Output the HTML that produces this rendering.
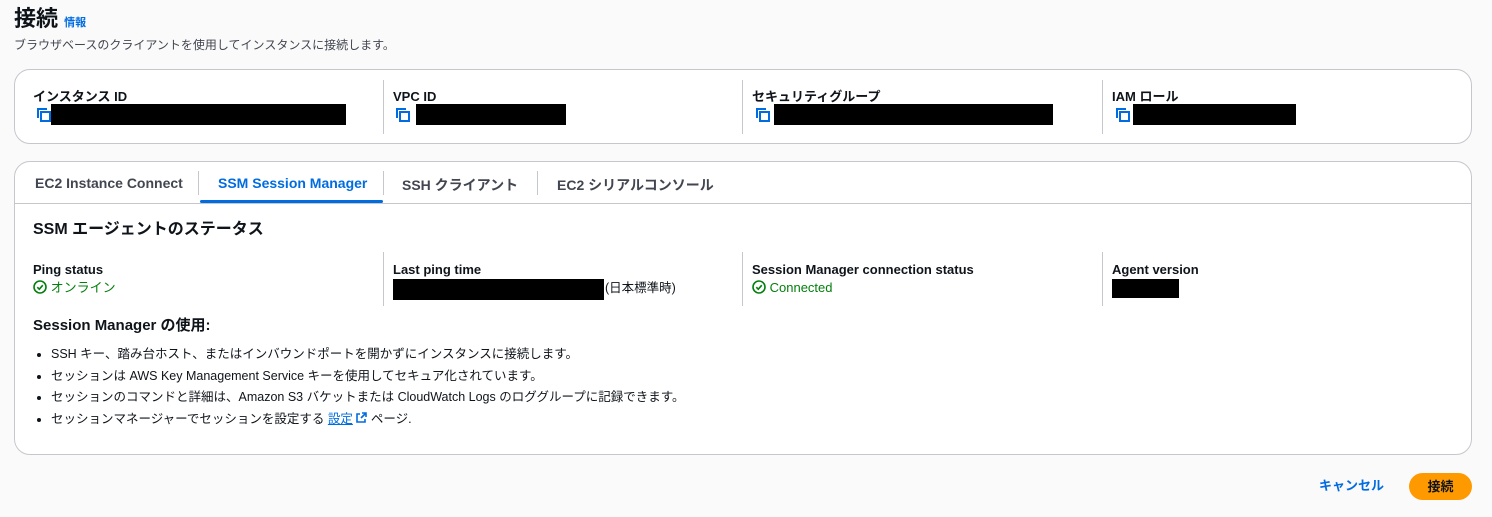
<!DOCTYPE html>
<html><head><meta charset="utf-8"><style>
*{box-sizing:border-box;margin:0;padding:0}
body{width:1492px;height:517px;background:#fafafa;font-family:"Liberation Sans","Noto Sans CJK JP",sans-serif;color:#0f141a;position:relative;overflow:hidden;font-size:13px}
.abs{position:absolute;line-height:16px;white-space:nowrap}
.card{position:absolute;left:14px;width:1458px;background:#fff;border:1px solid #c6c6cd;border-radius:16px}
.lbl{font-weight:bold;font-size:13px}
.blk{background:#000;position:absolute}
.div{position:absolute;width:1px;background:#c6c6cd}
.copy{position:absolute;width:14px;height:14px}
.tab{position:absolute;top:13px;font-weight:bold;font-size:14px;color:#424650}
.ok{color:#037f0c}
li{margin-bottom:5.5px;margin-left:18px;font-size:12.5px;line-height:16px}
</style></head><body>
<div class="abs" style="left:14px;top:6px;font-size:22px;font-weight:bold;line-height:26px">接続 <span style="font-size:11px;color:#006ce0;font-weight:bold">情報</span></div>
<div class="abs" style="left:14px;top:37px;font-size:12px;color:#424650">ブラウザベースのクライアントを使用してインスタンスに接続します。</div>

<div class="card" style="top:69px;height:75px">
 <div class="abs lbl" style="left:18px;top:19px">インスタンス ID</div>
 <div class="abs lbl" style="left:378px;top:19px">VPC ID</div>
 <div class="abs lbl" style="left:737px;top:19px">セキュリティグループ</div>
 <div class="abs lbl" style="left:1097px;top:19px">IAM ロール</div>
 <div class="div" style="left:368px;top:10px;height:54px"></div>
 <div class="div" style="left:727px;top:10px;height:54px"></div>
 <div class="div" style="left:1087px;top:10px;height:54px"></div>
 <svg class="copy" style="left:22px;top:38px" viewBox="0 0 14 14"><path d="M1 10V1h9" fill="none" stroke="#006ce0" stroke-width="2"/><rect x="4" y="4" width="9" height="9" fill="none" stroke="#006ce0" stroke-width="2"/></svg>
 <div class="blk" style="left:36px;top:34px;width:295px;height:21px"></div>
 <svg class="copy" style="left:381px;top:38px" viewBox="0 0 14 14"><path d="M1 10V1h9" fill="none" stroke="#006ce0" stroke-width="2"/><rect x="4" y="4" width="9" height="9" fill="none" stroke="#006ce0" stroke-width="2"/></svg>
 <div class="blk" style="left:401px;top:34px;width:150px;height:21px"></div>
 <svg class="copy" style="left:741px;top:38px" viewBox="0 0 14 14"><path d="M1 10V1h9" fill="none" stroke="#006ce0" stroke-width="2"/><rect x="4" y="4" width="9" height="9" fill="none" stroke="#006ce0" stroke-width="2"/></svg>
 <div class="blk" style="left:759px;top:34px;width:279px;height:21px"></div>
 <svg class="copy" style="left:1101px;top:38px" viewBox="0 0 14 14"><path d="M1 10V1h9" fill="none" stroke="#006ce0" stroke-width="2"/><rect x="4" y="4" width="9" height="9" fill="none" stroke="#006ce0" stroke-width="2"/></svg>
 <div class="blk" style="left:1118px;top:34px;width:163px;height:21px"></div>
</div>

<div class="card" style="top:161px;height:294px">
 <div class="tab" style="left:20px">EC2 Instance Connect</div>
 <div class="div" style="left:183px;top:9px;height:24px"></div>
 <div class="tab" style="left:203px;color:#006ce0">SSM Session Manager</div>
 <div class="abs" style="left:185px;top:38px;width:183px;height:3px;background:#006ce0;border-radius:2px"></div>
 <div class="div" style="left:368px;top:9px;height:24px"></div>
 <div class="tab" style="left:387px">SSH クライアント</div>
 <div class="div" style="left:522px;top:9px;height:24px"></div>
 <div class="tab" style="left:542px">EC2 シリアルコンソール</div>
 <div class="abs" style="left:0;top:41px;width:1456px;height:1px;background:#c6c6cd"></div>

 <div class="abs" style="left:18px;top:58px;font-size:16px;font-weight:bold;line-height:20px">SSM エージェントのステータス</div>
 <div class="abs lbl" style="left:18px;top:100px">Ping status</div>
 <div class="abs ok" style="left:18px;top:118px"><svg width="14" height="14" viewBox="0 0 14 14" style="vertical-align:-2px"><circle cx="7" cy="7" r="6" fill="none" stroke="#037f0c" stroke-width="1.6"/><path d="M4.3 7.2l2 2 3.5-4" fill="none" stroke="#037f0c" stroke-width="1.6"/></svg> オンライン</div>
 <div class="div" style="left:368px;top:90px;height:54px"></div>
 <div class="abs lbl" style="left:378px;top:100px">Last ping time</div>
 <div class="blk" style="left:378px;top:117px;width:211px;height:21px"></div>
 <div class="abs" style="left:590px;top:118px;font-size:12.5px">(日本標準時)</div>
 <div class="div" style="left:727px;top:90px;height:54px"></div>
 <div class="abs lbl" style="left:737px;top:100px">Session Manager connection status</div>
 <div class="abs ok" style="left:737px;top:118px"><svg width="14" height="14" viewBox="0 0 14 14" style="vertical-align:-2px"><circle cx="7" cy="7" r="6" fill="none" stroke="#037f0c" stroke-width="1.6"/><path d="M4.3 7.2l2 2 3.5-4" fill="none" stroke="#037f0c" stroke-width="1.6"/></svg> Connected</div>
 <div class="div" style="left:1087px;top:90px;height:54px"></div>
 <div class="abs lbl" style="left:1097px;top:100px">Agent version</div>
 <div class="blk" style="left:1097px;top:117px;width:67px;height:19px"></div>

 <div class="abs" style="left:18px;top:155px;font-size:15px;font-weight:bold;line-height:18px">Session Manager の使用:</div>
 <ul class="abs" style="left:18px;top:184px;list-style:disc">
  <li>SSH キー、踏み台ホスト、またはインバウンドポートを開かずにインスタンスに接続します。</li>
  <li>セッションは AWS Key Management Service キーを使用してセキュア化されています。</li>
  <li>セッションのコマンドと詳細は、Amazon S3 バケットまたは CloudWatch Logs のロググループに記録できます。</li>
  <li>セッションマネージャーでセッションを設定する <span style="color:#006ce0;text-decoration:underline">設定</span> <svg width="11" height="11" viewBox="0 0 11 11"><path d="M6 1h4v4M10 1L5 6M4 2H1v8h8V7" fill="none" stroke="#006ce0" stroke-width="1.6"/></svg> ページ.</li>
 </ul>
</div>

<div class="abs" style="left:1319px;top:478px;font-size:13px;font-weight:bold;color:#006ce0">キャンセル</div>
<div class="abs" style="left:1409px;top:473px;width:63px;height:27px;background:#ff9900;border-radius:14px;font-weight:bold;font-size:13px;text-align:center;line-height:27px">接続</div>
</body></html>
